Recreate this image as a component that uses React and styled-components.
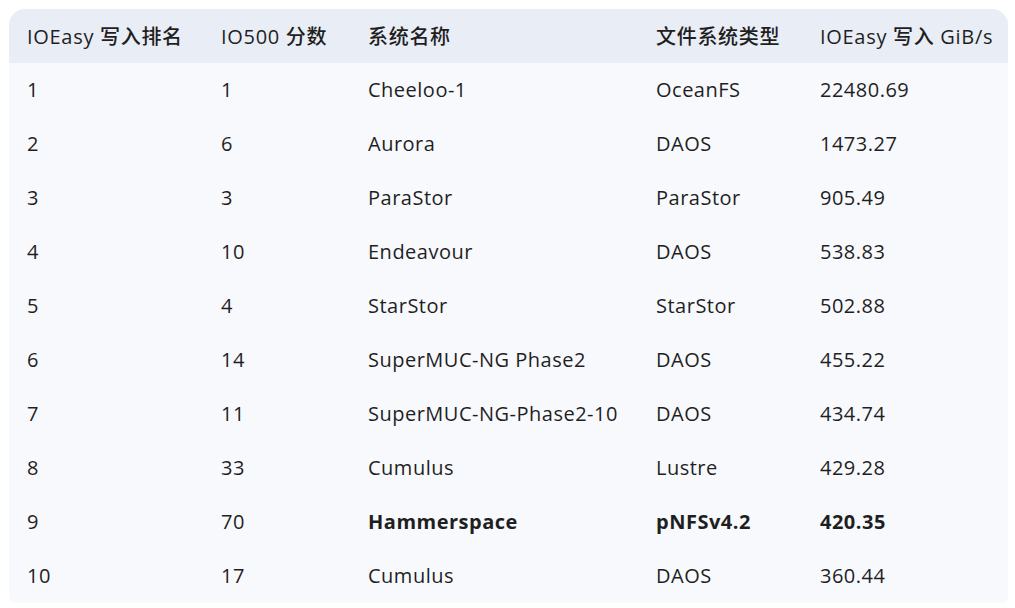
import React from "react";
import styled, { createGlobalStyle } from "styled-components";

const GlobalStyle = createGlobalStyle`
  html, body {
    margin: 0;
    padding: 0;
    background: #ffffff;
  }
  body {
    font-family: "Open Sans", "Noto Sans CJK SC", sans-serif;
    color: #1f1f1f;
  }
`;

const Page = styled.div`
  padding: 9px 7px 6px 9px;
`;

const Table = styled.div`
  display: grid;
  grid-template-columns: 194px 147px 288px 164px 1fr;
  background: #f8f9fd;
  border-radius: 16px 16px 6px 6px;
  overflow: hidden;
`;

const HeadCell = styled.div`
  background: #e9edf5;
  height: 54px;
  padding: 0 18px 2px;
  box-sizing: border-box;
  display: flex;
  align-items: center;
  font-size: 20px;
  letter-spacing: 0.7px;
  font-weight: 500;
  white-space: nowrap;
`;

const Cell = styled.div`
  height: 54px;
  padding: 0 18px 2px;
  box-sizing: border-box;
  display: flex;
  align-items: center;
  font-size: 20px;
  letter-spacing: 0.5px;
  font-weight: ${(p) => (p.$bold ? 700 : 400)};
  white-space: nowrap;
`;

const headers = ["IOEasy 写入排名", "IO500 分数", "系统名称", "文件系统类型", "IOEasy 写入 GiB/s"];

const rows = [
  ["1", "1", "Cheeloo-1", "OceanFS", "22480.69"],
  ["2", "6", "Aurora", "DAOS", "1473.27"],
  ["3", "3", "ParaStor", "ParaStor", "905.49"],
  ["4", "10", "Endeavour", "DAOS", "538.83"],
  ["5", "4", "StarStor", "StarStor", "502.88"],
  ["6", "14", "SuperMUC-NG Phase2", "DAOS", "455.22"],
  ["7", "11", "SuperMUC-NG-Phase2-10", "DAOS", "434.74"],
  ["8", "33", "Cumulus", "Lustre", "429.28"],
  ["9", "70", "Hammerspace", "pNFSv4.2", "420.35", [2, 3, 4]],
  ["10", "17", "Cumulus", "DAOS", "360.44"],
];

export default function App() {
  return (
    <>
      <GlobalStyle />
      <Page>
        <Table>
          {headers.map((h) => (
            <HeadCell key={h}>{h}</HeadCell>
          ))}
          {rows.map((r) =>
            r.slice(0, 5).map((v, i) => (
              <Cell key={r[0] + "-" + i} $bold={r[5] && r[5].includes(i)}>
                {v}
              </Cell>
            ))
          )}
        </Table>
      </Page>
    </>
  );
}
